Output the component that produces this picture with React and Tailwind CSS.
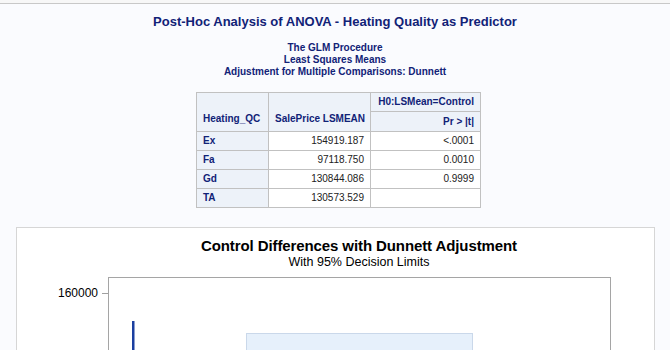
import React from "react";

const rows = [
  { level: "Ex", mean: "154919.187", p: "<.0001" },
  { level: "Fa", mean: "97118.750", p: "0.0010" },
  { level: "Gd", mean: "130844.086", p: "0.9999" },
  { level: "TA", mean: "130573.529", p: "" },
];

export default function App() {
  const cell = "border border-[#c1c1c1] px-[6px] py-0 whitespace-nowrap";
  return (
    <div className="min-h-screen bg-[#fafbfe] font-['Liberation_Sans',Arial,sans-serif]">
      {/* top rule */}
      <div className="h-[4px] border-b border-[#c8c8c8] bg-[#f7f7f7]"></div>

      {/* titles */}
      <div className="text-center text-[#112277] font-bold">
        <h1 className="mt-[10px] text-[13px] leading-[16px]">
          Post-Hoc Analysis of ANOVA - Heating Quality as Predictor
        </h1>
        <div className="mt-[12px] text-[10px] leading-[12px]">
          <p>The GLM Procedure</p>
          <p>Least Squares Means</p>
          <p>Adjustment for Multiple Comparisons: Dunnett</p>
        </div>
      </div>

      {/* LSMeans table */}
      <div className="flex justify-center mt-[14px] pl-[7px]">
        <table className="table-fixed w-[284px] border-collapse border border-[#c1c1c1] bg-white text-[10px] leading-[12px]">
          <colgroup>
            <col className="w-[72px]" />
            <col className="w-[102px]" />
            <col className="w-[110px]" />
          </colgroup>
          <thead className="text-[#112277] font-bold">
            <tr className="h-[19px]">
              <th rowSpan={2} className={`${cell} bg-[#edf2f9] text-left align-bottom pb-[6px]`}>
                Heating_QC
              </th>
              <th rowSpan={2} className={`${cell} bg-[#edf2f9] text-right align-bottom pb-[6px]`}>
                SalePrice LSMEAN
              </th>
              <th className={`${cell} bg-[#edf2f9] text-right`}>H0:LSMean=Control</th>
            </tr>
            <tr className="h-[20px]">
              <th className={`${cell} bg-[#edf2f9] text-right`}>Pr &gt; |t|</th>
            </tr>
          </thead>
          <tbody>
            {rows.map((r) => (
              <tr key={r.level} className="h-[19px]">
                <th className={`${cell} bg-[#edf2f9] text-left font-bold text-[#112277]`}>{r.level}</th>
                <td className={`${cell} text-right text-[#222]`}>{r.mean}</td>
                <td className={`${cell} text-right text-[#222]`}>{r.p}</td>
              </tr>
            ))}
          </tbody>
        </table>
      </div>

      {/* chart card */}
      <div className="mt-[19px] ml-[16px] mr-[15px] border border-[#d6d6d6] bg-white pb-[20px]">
        <div className="ml-[91px] mr-[44px] mt-[9px] text-center text-black">
          <div className="text-[15px] leading-[18px] font-bold tracking-[-0.1px]">
            Control Differences with Dunnett Adjustment
          </div>
          <div className="text-[12.5px] leading-[15px]">With 95% Decision Limits</div>
        </div>
        <div className="mt-[7px] flex">
          <div className="w-[91px] shrink-0">
            <div className="mt-[9px] flex items-center justify-end">
              <span className="text-[12px] leading-[14px] text-black">160000</span>
              <span className="ml-[4px] h-px w-[6px] bg-[#a0a0a0]"></span>
            </div>
          </div>
          <div className="h-[220px] w-[503px] shrink-0 border border-[#a5a5a5] bg-white">
            <svg width="501" height="218" className="block">
              <rect x="23" y="43" width="2.5" height="175" fill="#1b3fa0" />
              <rect x="137.5" y="55.5" width="226" height="170" fill="#e6f0fb" stroke="#cad8ea" />
            </svg>
          </div>
        </div>
      </div>
    </div>
  );
}
